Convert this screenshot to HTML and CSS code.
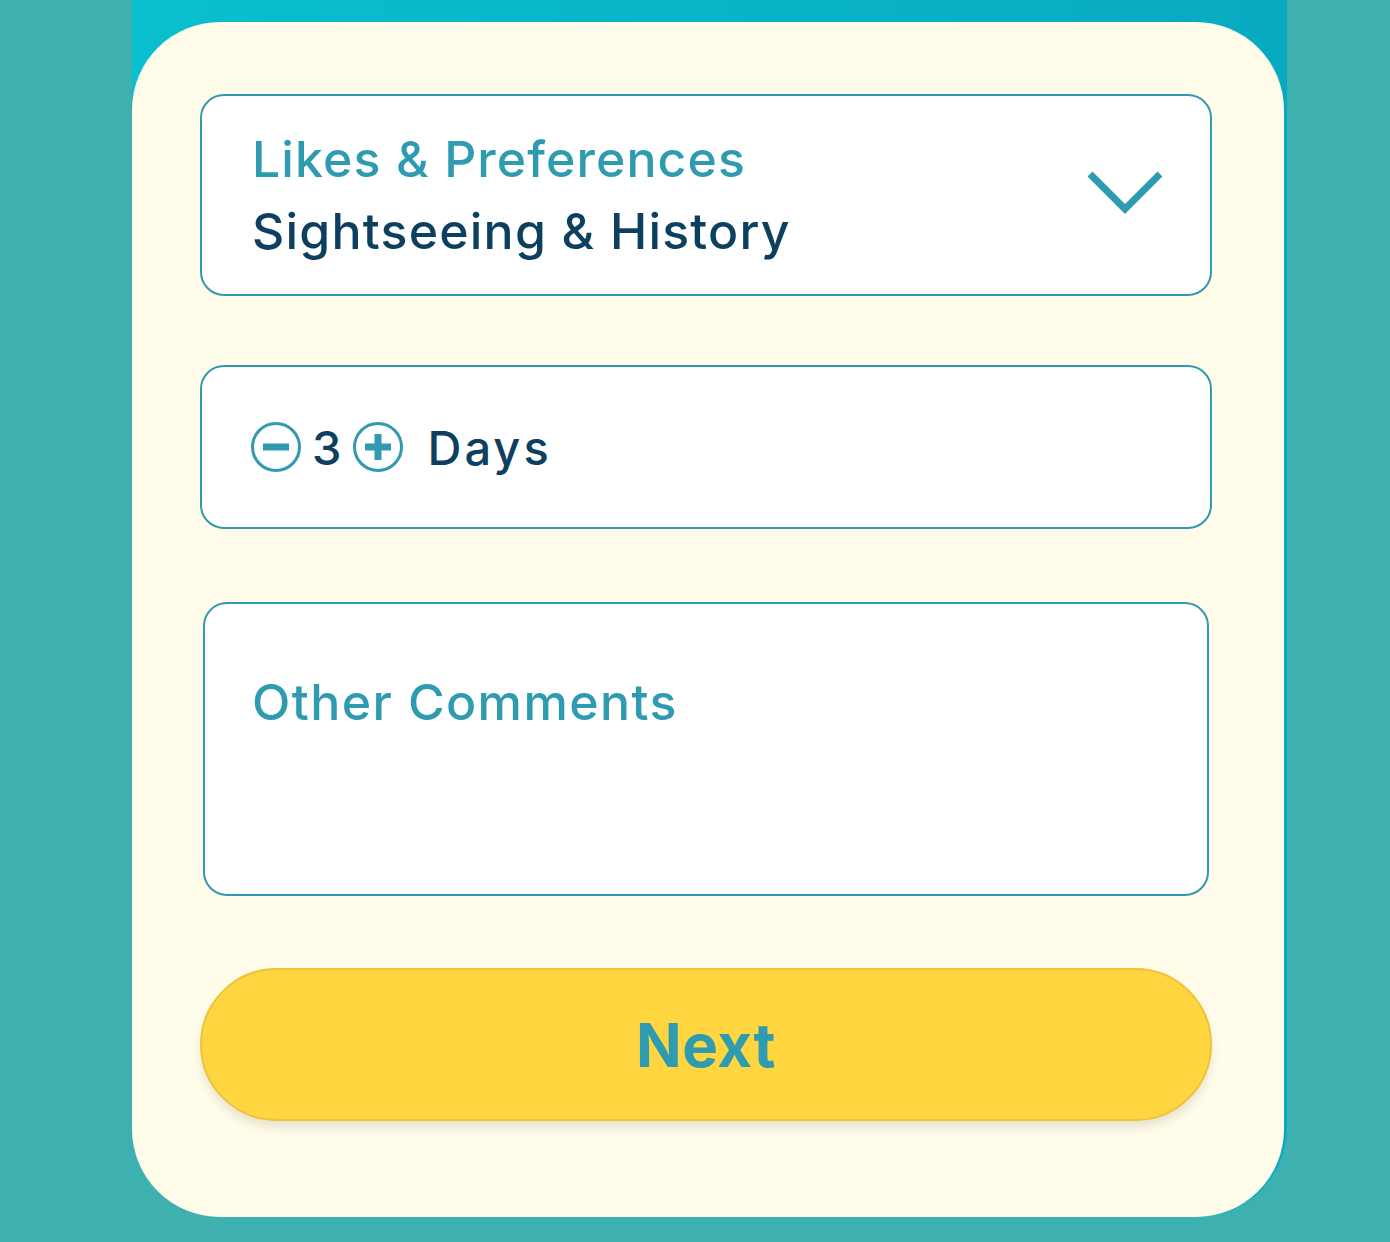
FILE: index.html
```html
<!DOCTYPE html>
<html lang="en">
<head>
<meta charset="utf-8">
<title>Trip preferences</title>
<link rel="stylesheet" href="styles.css">
</head>
<body>
<div class="frame">
  <div class="card">
    <div class="field select">
      <div class="select-text">
        <div class="label">Likes &amp; Preferences</div>
        <div class="value">Sightseeing &amp; History</div>
      </div>
      <svg class="chevron" width="80" height="50" viewBox="0 0 80 50">
        <polyline points="3,5 38,40 73,5" fill="none" stroke="#2e9bb0" stroke-width="7"/>
      </svg>
    </div>

    <div class="field stepper">
      <svg class="step-btn" width="52" height="52" viewBox="0 0 52 52">
        <circle cx="26" cy="26" r="23.5" fill="none" stroke="#3399b0" stroke-width="3"/>
        <rect x="13" y="22.5" width="26" height="7" fill="#3399b0"/>
      </svg>
      <span class="count">3</span>
      <svg class="step-btn" width="52" height="52" viewBox="0 0 52 52">
        <circle cx="26" cy="26" r="23.5" fill="none" stroke="#3399b0" stroke-width="3"/>
        <rect x="13" y="22.5" width="26" height="7" fill="#3399b0"/>
        <rect x="22.5" y="13" width="7" height="26" fill="#3399b0"/>
      </svg>
      <span class="unit">Days</span>
    </div>

    <div class="field comments">
      <div class="placeholder">Other Comments</div>
    </div>

    <button class="next">Next</button>
  </div>
</div>
</body>
</html>
```
FILE: styles.css
```css
html, body {
  margin: 0;
  padding: 0;
}
body {
  background: #3eb0b0;
  font-family: Inter, "Noto Sans", sans-serif;
  height: 1242px;
  overflow: hidden;
}
.frame {
  width: 1155px;
  margin-left: 132px;
  height: 1217px;
  background: linear-gradient(90deg, #09bfce 0%, #08aac1 100%);
  border-radius: 0 0 90px 90px;
  padding-top: 22px;
  box-sizing: border-box;
}
.card {
  width: 1152px;
  height: 1195px;
  background: #fffcea;
  border-radius: 88px;
  box-sizing: border-box;
  padding: 72px 72px 0 68px;
  display: flex;
  flex-direction: column;
}
.field {
  background: #fff;
  border: 2.5px solid #3399b0;
  border-radius: 24px;
  box-sizing: border-box;
}
.select {
  height: 202px;
  display: flex;
  align-items: center;
  justify-content: space-between;
  padding: 0 43px 0 50px;
}
.select-text {
  display: flex;
  flex-direction: column;
  gap: 12px;
}
.label {
  color: #2e9bb0;
  font-size: 50px;
  font-weight: 500;
  line-height: 60px;
  letter-spacing: 1.1px;
}
.value {
  color: #0d3f5f;
  font-size: 50px;
  font-weight: 500;
  line-height: 60px;
  letter-spacing: 1.2px;
}
.chevron {
  display: block;
  margin-top: -2px;
}
.stepper {
  margin-top: 69px;
  height: 164px;
  display: flex;
  align-items: center;
  padding-left: 48px;
}
.step-btn {
  display: block;
}
.count {
  color: #0d3f5f;
  font-size: 47px;
  font-weight: 500;
  line-height: 1;
  margin: 0 11px 0 10px;
}
.unit {
  color: #0d3f5f;
  font-size: 47px;
  font-weight: 500;
  line-height: 1;
  margin-left: 23px;
  letter-spacing: 3px;
}
.comments {
  margin: 73px 3px 0 3px;
  height: 294px;
  padding: 68px 0 0 47px;
}
.placeholder {
  color: #2e9bb0;
  font-size: 50px;
  font-weight: 500;
  line-height: 60px;
  letter-spacing: 1.4px;
}
.next {
  margin-top: 72px;
  height: 153px;
  width: 100%;
  border: 2px solid #eec33c;
  border-radius: 80px;
  background: #ffd540;
  color: #2e9bb0;
  font-family: Inter, "Noto Sans", sans-serif;
  font-size: 60px;
  font-weight: 700;
  letter-spacing: 0.5px;
  box-shadow: 0 7px 8px rgba(90, 90, 60, 0.14);
  padding: 0;
  cursor: pointer;
}
```
